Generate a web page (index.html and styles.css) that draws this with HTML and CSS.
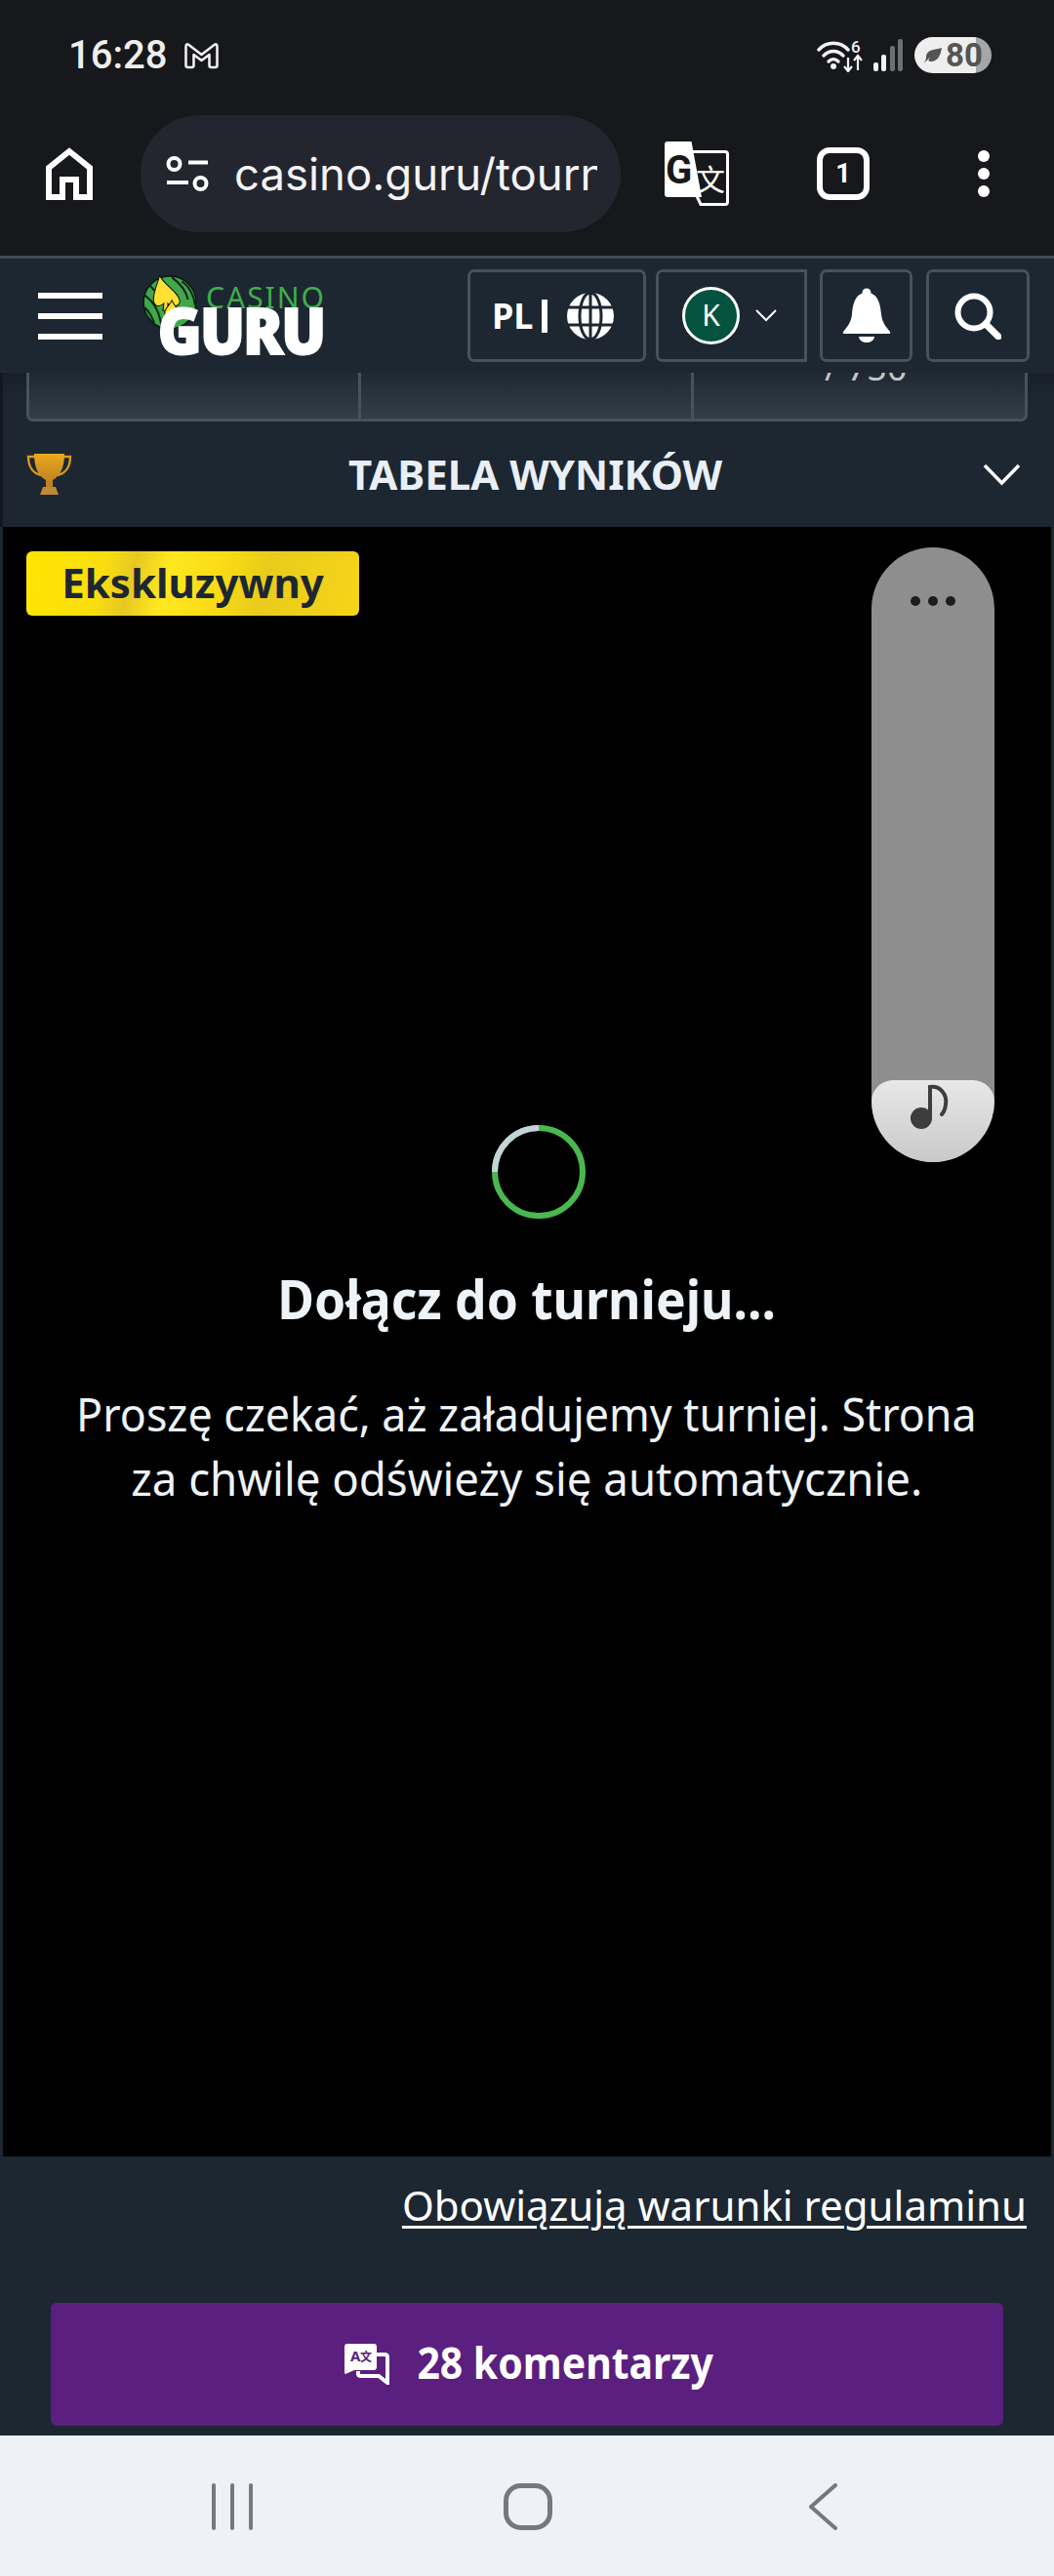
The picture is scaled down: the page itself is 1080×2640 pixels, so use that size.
FILE: index.html
```html
<!DOCTYPE html>
<html lang="pl">
<head>
    <meta charset="UTF-8">
    <title>Casino Guru</title>
    <link rel="stylesheet" href="styles.css">
</head>
<body>
<div id="phone">
    <div class="status">
        <span class="time">16:28</span>
        <svg class="gmail" viewBox="0 0 36 28"><path d="M2 5Q2 1 5 3L18 13L31 3Q34 1 34 5V24Q34 26 32 26H28Q26 26 26 24V13L18 19L10 13V24Q10 26 8 26H4Q2 26 2 24Z" fill="none" stroke="#eee" stroke-width="2.6" stroke-linejoin="round"/></svg>
        <div class="status-right">
            <svg class="wifi" viewBox="0 0 47 34">
                <g fill="none" stroke="#f2f2f2" stroke-width="3.4" stroke-linecap="round">
                    <path d="M2 11C10 2 24 2 32 11"/>
                    <path d="M7 17C13 11 21 11 27 17"/>
                    <path d="M12 23C15 20 19 20 22 23"/>
                </g>
                <circle cx="17" cy="28" r="3" fill="#f2f2f2"/>
                <text x="35" y="14" class="wifi-six">6</text>
                <path d="M32 19V32M28 28L32 33L36 28" fill="none" stroke="#f2f2f2" stroke-width="2.2"/>
                <path d="M42 32V18M38 22L42 17L46 22" fill="none" stroke="#f2f2f2" stroke-width="2.2"/>
            </svg>
            <div class="signal">
                <span class="bar b1"></span>
                <span class="bar b2"></span>
                <span class="bar b3 off"></span>
                <span class="bar b4 off"></span>
            </div>
            <div class="battery">
                <svg class="leaf" viewBox="0 0 20 18"><path d="M1 17C3 14 5 13 7 11C5 14 5 15 8 15C15 15 18 8 19 1C13 3 3 2 3 11C3 13 2 14 1 17Z" fill="#555"/></svg>
                <span>80</span>
            </div>
        </div>
    </div>
    <div class="toolbar">
        <svg class="home" viewBox="0 0 48 54"><path d="M24 4L45 21V51H31V33H17V51H3V21Z" fill="none" stroke="#fff" stroke-width="6"/></svg>
        <div class="url">
            <svg class="tune" viewBox="0 0 44 37">
                <g fill="none" stroke="#fff" stroke-width="4">
                    <circle cx="8.500" cy="8" r="6"/>
                    <circle cx="35.500" cy="28" r="6"/>
                    <path d="M23 6.500H43M1 27H23"/>
                </g>
            </svg>
            <span class="url-text">casino.guru/tourn</span>
        </div>
        <svg class="translate" viewBox="0 0 66 66">
            <path d="M3 0H27.500L38 57H3Q0 57 0 54V3Q0 0 3 0Z" fill="#fff"/>
            <path d="M29 10.500H62Q64.500 10.500 64.500 13V62Q64.500 64.500 62 64.500H37L33 56" fill="none" stroke="#fff" stroke-width="3"/>
            <text x="1" y="43" class="tr-g">G</text>
            <text x="32" y="50" class="tr-zi">文</text>
        </svg>
        <div class="tabs">1</div>
        <div class="more"><i></i><i></i><i></i></div>
    </div>
    <div class="header-line"></div>
    <div class="site-header">
        <div class="burger"><i></i><i></i><i></i></div>
        <div class="logo">
            <svg class="logo-leaf" viewBox="0 0 56 56">
                <circle cx="28" cy="27" r="26" fill="#3fa84a" stroke="#0c1a10" stroke-width="1.500"/>
                <g fill="none" stroke="#10241a" stroke-width="2">
                    <path d="M3 20C12 26 18 36 20 52"/>
                    <path d="M8 10C16 18 24 28 28 40"/>
                    <path d="M30 2C38 8 44 14 46 24"/>
                    <path d="M40 6C48 12 52 20 53 30"/>
                    <path d="M3 32C8 36 12 44 13 50"/>
                </g>
                <path d="M18 0C21 9 38 17 38 26C37 32 29 32 26 28C26 31 26 33 27 35H21C22 33 22 31 22 28C18 32 13 31 12 26C11 17 16 9 18 0Z" fill="#ffe033" stroke="#111" stroke-width="1"/>
                <path d="M30 25C32 30 37 33 36 38C35 40 32 40 31 39L32 44H26L28 39C27 40 24 40 23 38C22 33 28 30 30 25Z" fill="#ffe033" stroke="#111" stroke-width="1"/>
            </svg>
            <span class="logo-casino">CASINO</span>
            <span class="logo-guru">GURU</span>
        </div>
        <div class="h-btn lang">
            <span class="lang-text">PL</span>
            <i class="lang-sep"></i>
            <svg class="globe" viewBox="0 0 48 48">
                <circle cx="24" cy="24" r="24" fill="#fff"/>
                <g fill="none" stroke="#1c2731" stroke-width="3">
                    <ellipse cx="24" cy="24" rx="11" ry="24"/>
                    <path d="M24 0V48M0 15H48M0 33H48"/>
                </g>
            </svg>
        </div>
        <div class="h-btn user">
            <span class="avatar">K</span>
            <svg class="user-arrow" viewBox="0 0 22 13"><path d="M1 1L11 11L21 1" fill="none" stroke="#fff" stroke-width="2"/></svg>
        </div>
        <div class="h-btn bell">
            <svg class="bell-icon" viewBox="0 0 50 57">
                <circle cx="25" cy="5" r="4.500" fill="#fff"/>
                <path d="M25 5C13 5 11 17 10 27C9 36 5 40 1 45Q0 47 3 47H47Q50 47 49 45C45 40 41 36 40 27C39 17 37 5 25 5Z" fill="#fff"/>
                <path d="M17 50H33C32 58 18 58 17 50Z" fill="#fff"/>
            </svg>
        </div>
        <div class="h-btn search">
            <svg class="search-icon" viewBox="0 0 48 48">
                <circle cx="20" cy="20" r="16.500" fill="none" stroke="#fff" stroke-width="6"/>
                <path d="M32 32L45 45" stroke="#fff" stroke-width="7" stroke-linecap="round"/>
            </svg>
        </div>
    </div>
    <div class="stats-wrap">
        <div class="stats">
            <div class="cell c1"></div>
            <div class="cell c2"></div>
            <div class="cell c3"><span>/ 750</span></div>
        </div>
    </div>
    <div class="board">
        <svg class="trophy" viewBox="0 0 47 42">
            <defs>
                <linearGradient id="gold" x1="0" y1="0" x2="0" y2="1">
                    <stop offset="0" stop-color="#e9a91d"/>
                    <stop offset="1" stop-color="#b97c27"/>
                </linearGradient>
            </defs>
            <path d="M9 3H2C2 12 6 20 15 22M38 3H45C45 12 41 20 32 22" fill="none" stroke="#d89b22" stroke-width="2.400"/>
            <path d="M8 0H39C39 12 36 22 27 27V34H20V27C11 22 8 12 8 0Z" fill="url(#gold)"/>
            <path d="M17 34H30L33 42H14Z" fill="#c08a35"/>
        </svg>
        <span class="board-title">TABELA WYNIKÓW</span>
        <svg class="board-arrow" viewBox="0 0 39 23"><path d="M2 2L19.500 20L37 2" fill="none" stroke="#fff" stroke-width="3.500"/></svg>
    </div>
    <div class="game">
        <div class="badge">Ekskluzywny</div>
        <div class="widget">
            <div class="widget-dots"><i></i><i></i><i></i></div>
            <div class="widget-music">
                <svg class="note" viewBox="0 0 42 48">
                    <circle cx="12" cy="36" r="11" fill="#3d3d3d"/>
                    <path d="M21 36V4C31 2 39 12 37 22C36.500 26 35 30 33 32" fill="none" stroke="#3d3d3d" stroke-width="4" stroke-linecap="round"/>
                </svg>
            </div>
        </div>
        <svg class="spinner" viewBox="0 0 96 96">
            <circle cx="48" cy="48" r="45" fill="none" stroke="#49b94f" stroke-width="6"/>
            <path d="M3 48A45 45 0 0 1 48 3" fill="none" stroke="#c6d2da" stroke-width="6"/>
        </svg>
        <h2 class="game-title">Dołącz do turnieju...</h2>
        <p class="game-line first">Proszę czekać, aż załadujemy turniej. Strona</p>
        <p class="game-line second">za chwilę odświeży się automatycznie.</p>
    </div>
    <div class="footer">
        <a class="terms">Obowiązują warunki regulaminu</a>
        <div class="comments">
            <svg class="comments-icon" viewBox="0 0 46 42">
                <path d="M3 0H30Q33 0 33 3V24Q33 27 30 27H10L1 31Q0 31 0 29V3Q0 0 3 0Z" fill="#fff"/>
                <path d="M33 11H41Q44 11 44 14V40L35 33H17Q14 33 14 31V28" fill="none" stroke="#fff" stroke-width="4"/>
                <text x="6" y="18" class="ci-a">A</text>
                <text x="16" y="18" class="ci-zi">文</text>
            </svg>
            <span class="comments-text">28 komentarzy</span>
        </div>
    </div>
    <div class="navbar">
        <svg class="nav-recent" viewBox="0 0 44 48"><path d="M3 2V46M22 2V46M41 2V46" stroke="#76797c" stroke-width="4" stroke-linecap="round"/></svg>
        <svg class="nav-home" viewBox="0 0 50 48"><rect x="2.500" y="2.500" width="45" height="43" rx="15" fill="none" stroke="#76797c" stroke-width="5"/></svg>
        <svg class="nav-back" viewBox="0 0 30 48"><path d="M28 2L3 24L28 46" fill="none" stroke="#76797c" stroke-width="4" stroke-linecap="round" stroke-linejoin="round"/></svg>
    </div>
</div>
</body>
</html>
```

FILE: styles.css
```css
*{
    margin:0;
    padding:0;
    box-sizing:border-box;
}
html, body{
    width:1080px;
    height:2640px;
    overflow:hidden;
    background:#1c2731;
}
body{
    font-family:"Noto Sans", "Open Sans", sans-serif;
    color:#fff;
}
i{
    display:block;
}
svg{
    display:block;
    flex:none;
}
#phone{
    width:1080px;
    height:2640px;
    display:flex;
    flex-direction:column;
}

/* android status bar */
.status{
    height:118px;
    background:#17181b;
    display:flex;
    align-items:flex-start;
    padding:38px 64px 0 70px;
}
.time{
    font-family:Roboto, sans-serif;
    font-weight:500;
    font-size:40px;
    line-height:38px;
    color:#eee;
}
.gmail{
    width:37px;
    height:28px;
    margin:5px 0 0 17px;
}
.status-right{
    margin-left:auto;
    display:flex;
    align-items:flex-start;
}
.wifi{
    width:47px;
    height:34px;
    margin-top:2px;
}
.wifi-six{
    font:500 17px Roboto, sans-serif;
    fill:#f2f2f2;
}
.signal{
    width:30px;
    height:33px;
    margin:2px 0 0 11px;
    display:flex;
    align-items:flex-end;
    justify-content:space-between;
}
.bar{
    width:5px;
    background:#f2f2f2;
    border-radius:2px;
}
.bar.off{
    background:#6d6f71;
}
.b1{ height:9px; }
.b2{ height:17px; }
.b3{ height:26px; }
.b4{ height:33px; }
.battery{
    width:79px;
    height:37px;
    margin-left:12px;
    border-radius:19px;
    background:linear-gradient(to right, #eeeeee 63px, #a6a6a6 63px);
    display:flex;
    align-items:center;
    padding-left:9px;
    gap:3px;
    font:700 33px/37px Roboto, sans-serif;
    color:#555;
}
.leaf{
    width:20px;
    height:18px;
}

/* browser toolbar */
.toolbar{
    height:144px;
    background:#17181b;
    padding:0 0 24px 47px;
    display:flex;
    align-items:center;
}
.home{
    width:48px;
    height:54px;
}
.url{
    width:492px;
    height:120px;
    margin-left:49px;
    padding:0 24px 0 26px;
    border-radius:60px;
    background:#24262f;
    display:flex;
    align-items:center;
    gap:26px;
}
.tune{
    width:44px;
    height:37px;
}
.url-text{
    font-family:Inter, Roboto, sans-serif;
    font-size:45.5px;
    color:#f4f4f6;
    white-space:nowrap;
    overflow:hidden;
    flex:1;
}
.translate{
    width:66px;
    height:66px;
    margin-left:45px;
}
.tr-g{
    font:700 40px Roboto, sans-serif;
    fill:#17181b;
}
.tr-zi{
    font:400 30px "Noto Sans CJK SC", sans-serif;
    fill:#fff;
}
.tabs{
    width:54px;
    height:54px;
    margin-left:90px;
    border:6px solid #fff;
    border-radius:13px;
    font:700 27px/42px Roboto, sans-serif;
    text-align:center;
}
.more{
    margin-left:111px;
    display:flex;
    flex-direction:column;
    gap:6px;
}
.more i{
    width:12px;
    height:12px;
    border-radius:50%;
    background:#fff;
}
.header-line{
    height:3px;
    background:#3f4a54;
}

/* site header */
.site-header{
    height:117px;
    background:#1c2731;
    display:flex;
    align-items:center;
    padding-left:39px;
}
.burger{
    width:66px;
    display:flex;
    flex-direction:column;
    gap:15px;
}
.burger i{
    height:6px;
    background:#fff;
}
.logo{
    position:relative;
    width:187px;
    height:82px;
    margin:0 147px 0 40px;
    display:flex;
    flex-direction:column;
    align-items:flex-end;
}
.logo-leaf{
    position:absolute;
    left:0;
    top:-1px;
    width:58px;
    height:58px;
}
.logo-casino{
    color:#3fae49;
    font-size:30px;
    line-height:32px;
    letter-spacing:2px;
    margin:6px -2px 0 0;
    height:24px;
}
.logo-guru{
    position:relative;
    font-family:"Open Sans", sans-serif;
    font-weight:800;
    font-size:66px;
    line-height:49px;
    letter-spacing:-2px;
    -webkit-text-stroke:2px #fff;
    transform:scaleX(.92);
    transform-origin:right center;
}
.h-btn{
    height:95px;
    border:3px solid #46525c;
    border-radius:7px;
    display:flex;
    align-items:center;
}
.lang{
    width:183px;
    padding-left:22px;
}
.lang-text{
    font-weight:700;
    font-size:36px;
    line-height:36px;
}
.lang-sep{
    width:6px;
    height:34px;
    margin-left:9px;
    background:#fff;
}
.globe{
    width:48px;
    height:48px;
    margin-left:20px;
}
.user{
    width:155px;
    margin-left:10px;
    padding-left:24px;
    border-radius:7px 0 0 7px;
}
.avatar{
    width:59px;
    height:59px;
    border:3px solid #fff;
    border-radius:50%;
    background:#045340;
    font-size:30px;
    line-height:52px;
    text-align:center;
}
.user-arrow{
    width:22px;
    height:13px;
    margin-left:16px;
}
.bell{
    width:95px;
    margin-left:13px;
    justify-content:center;
}
.bell-icon{
    width:50px;
    height:57px;
}
.search{
    width:106px;
    margin-left:14px;
    justify-content:center;
}
.search-icon{
    width:48px;
    height:48px;
}

/* tournament stats, scrolled under the header */
.stats-wrap{
    height:50px;
    background:linear-gradient(to bottom, #18212a, #1c2731 60%);
    border-left:3px solid #12181f;
    padding:0 27px 0 24px;
}
.stats{
    height:50px;
    display:flex;
    border:3px solid #46525c;
    border-top:none;
    border-radius:0 0 7px 7px;
    background:linear-gradient(to bottom, #1f2932, #333e48);
}
.cell{
    height:47px;
    overflow:hidden;
}
.c1{
    width:340px;
    border-right:3px solid #46525c;
}
.c2{
    width:341px;
    border-right:3px solid #46525c;
}
.c3{
    flex:1;
    display:flex;
    align-items:flex-end;
    padding:0 0 34px 134px;
    font-size:36px;
    line-height:36px;
    color:#c3c6c9;
    white-space:nowrap;
}

/* leaderboard row */
.board{
    height:108px;
    background:#1c2731;
    border-left:3px solid #12181f;
    display:flex;
    align-items:center;
    padding:0 34px 0 24px;
}
.trophy{
    width:47px;
    height:42px;
}
.board-title{
    flex:1;
    padding-left:16px;
    text-align:center;
    font-weight:700;
    font-size:42px;
    line-height:50px;
    color:#e9eff6;
}
.board-arrow{
    width:39px;
    height:23px;
}

/* black game area */
.game{
    position:relative;
    height:1670px;
    margin:0 3.500px 0 3px;
    background:#000;
    padding-top:613px;
    display:flex;
    flex-direction:column;
    align-items:center;
}
.badge{
    position:absolute;
    left:24px;
    top:25px;
    width:341px;
    height:66px;
    border-radius:6px;
    background:linear-gradient(105deg, #ffe600 0%, #f9dd10 24%, #e6c822 32%, #ffe81f 42%, #f6d915 60%, #e9cb1c 70%, #f5d518 100%);
    color:#1c2731;
    font-weight:700;
    font-size:42px;
    line-height:64px;
    text-align:center;
}
.widget{
    position:absolute;
    left:890px;
    top:21px;
    width:126px;
    height:630px;
    border-radius:63px;
    background:#8e8e8e;
    overflow:hidden;
    display:flex;
    flex-direction:column;
    justify-content:space-between;
}
.widget-dots{
    margin-top:50px;
    display:flex;
    justify-content:center;
    gap:8px;
}
.widget-dots i{
    width:10px;
    height:10px;
    border-radius:50%;
    background:#1d1d1d;
}
.widget-music{
    height:84px;
    border-radius:22px 22px 0 0;
    background:linear-gradient(to bottom, #e8e8e8, #c9c9c9);
    padding:3px 0 0 39px;
}
.note{
    width:42px;
    height:48px;
}
.spinner{
    width:96px;
    height:96px;
    margin-left:24px;
}
.game-title{
    margin-top:45px;
    font-weight:700;
    font-size:56px;
    line-height:72px;
    color:#eef3f8;
    white-space:nowrap;
    transform:scaleX(.92);
}
.game-line{
    font-size:48px;
    line-height:66px;
    color:#eef3f8;
    white-space:nowrap;
}
.first{
    margin-top:50px;
    transform:scaleX(.933);
}
.second{
    transform:scaleX(.95);
}

/* footer */
.footer{
    flex:1;
    background:#1c2731;
    padding:0 28px 0 52px;
    display:flex;
    flex-direction:column;
}
.terms{
    align-self:flex-end;
    margin-top:22px;
    font-size:42px;
    line-height:56px;
    color:#fff;
    text-decoration:underline;
    text-decoration-thickness:3px;
    text-underline-offset:5px;
}
.comments{
    width:976px;
    height:126px;
    margin-top:72px;
    padding-left:15px;
    border-radius:6px;
    background:#5b1f7f;
    display:flex;
    align-items:center;
    justify-content:center;
    gap:17px;
    font-weight:700;
    font-size:44px;
    line-height:60px;
}
.comments-text{
    transform:scaleX(.93);
    margin-top:-4px;
}
.comments-icon{
    width:46px;
    height:42px;
}
.ci-a{
    font:700 15px "Noto Sans", sans-serif;
    fill:#5b1f7f;
}
.ci-zi{
    font:700 12px "Noto Sans CJK SC", sans-serif;
    fill:#5b1f7f;
}

/* android nav bar */
.navbar{
    height:144px;
    background:#eef2f6;
    display:flex;
    align-items:flex-start;
    padding:49px 0 0 216px;
}
.nav-recent{
    width:44px;
    height:48px;
}
.nav-home{
    width:50px;
    height:48px;
    margin-left:256px;
}
.nav-back{
    width:30px;
    height:48px;
    margin-left:262px;
}
```
